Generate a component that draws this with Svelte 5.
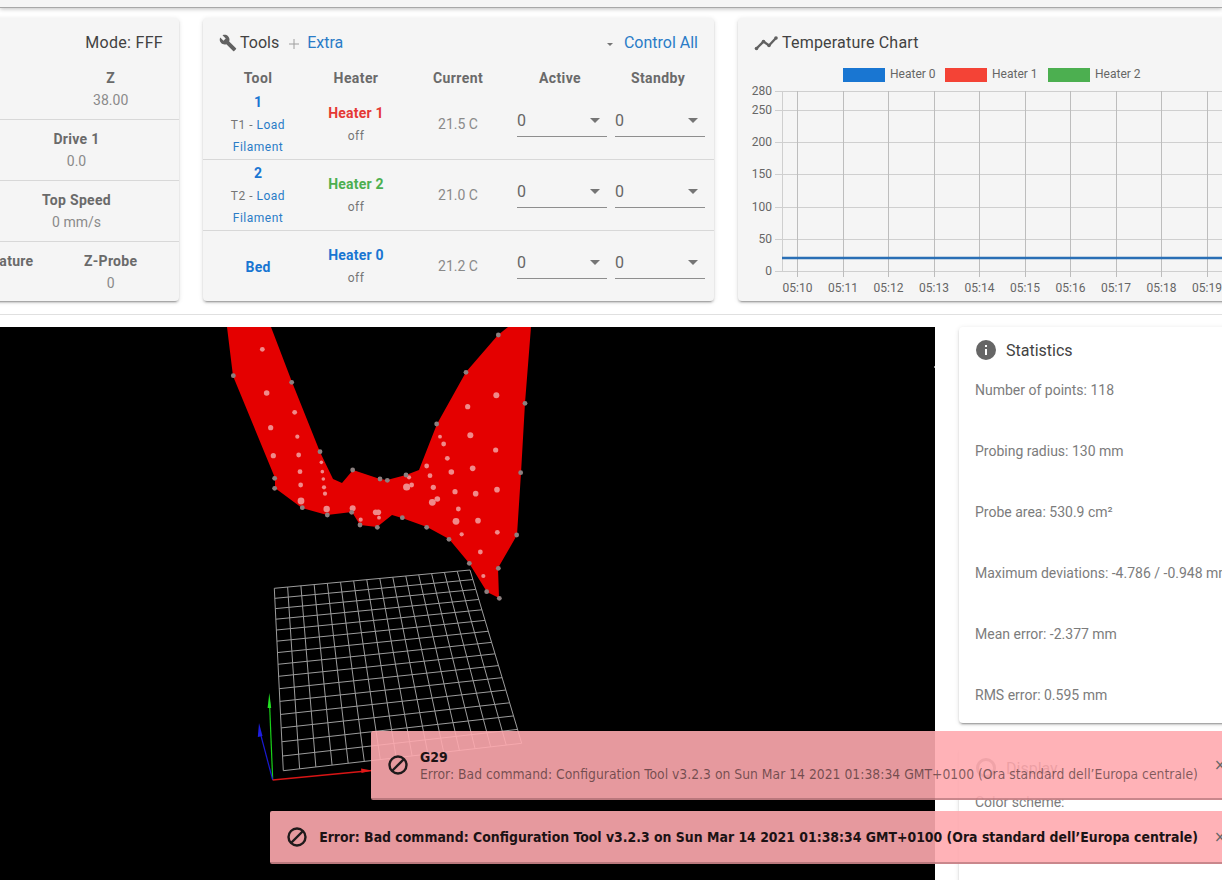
<script>
  const sx = (z) => 210 + z / 3;
  const sy = (z) => z / 3 - 2;

  // mesh outline, traced in page px (viewer origin is y=327)
  const outline = [[227,327],[271,327],[292,382],[320,452],[333,479],[342,483],[353,470],[380,479],[387,480],[406,475],[419,470],[437,424],[466,372],[498,335],[508,327],[531,327],[525,403],[521,473],[517,535],[498,568],[499,598],[487,592],[469,563],[449,539],[427,527],[402,518],[392,515],[377,527],[360,525],[352,512],[327,515],[302,508],[275,488],[275,478],[233,376]]
    .map(([x, y]) => `${x},${y - 327}`).join(" ");

  const edgePoints = [[70,152],[245,172],[330,380],[194,460],[194,490],[277,548],[352,570],[428,435],[510,462],[532,466],[588,450],[680,297],[768,142],[865,30],[945,235],[932,443],[920,630],[865,730],[868,820],[830,800],[778,715],[717,643],[650,607],[577,578],[502,607],[450,600],[425,562]];
  const innerPoints = [[157,73,2.4],[170,204,2.8],[254,262,2.4],[182,308,2.6],[262,335,2.1],[190,392,2.6],[266,390,2.4],[270,440,2.4],[272,480,2.4],[273,528,3.4],[334,412,1.8],[337,440,1.8],[340,462,1.8],[342,487,2.1],[345,506,2.1],[350,552,3.2],[428,550,3],[452,584,2.1],[497,562,2.8],[505,562,2.8],[507,578,1.9],[590,486,3.6],[605,480,2.4],[597,457,2.1],[650,423,2.4],[660,452,2.4],[670,487,2.6],[667,532,3.4],[682,522,2.8],[712,400,2.4],[701,357,2.4],[690,335,1.9],[724,441,2.8],[735,500,2.6],[745,552,2.4],[738,589,3.4],[755,628,2.1],[804,587,2.8],[797,506,2.8],[788,430,2.8],[781,331,3],[773,245,2.6],[859,211,3],[857,375,2.6],[861,494,2.8],[862,622,2.4],[811,681,2.4],[820,753,2.1]];

  // projective map of the unit square on to the bed quad
  const quad = [[274.3,261.3],[470,243],[521.7,416.3],[283.3,443.7]];
  function homography([[x0,y0],[x1,y1],[x2,y2],[x3,y3]]) {
    const dx1 = x1 - x2, dx2 = x3 - x2, dx3 = x0 - x1 + x2 - x3;
    const dy1 = y1 - y2, dy2 = y3 - y2, dy3 = y0 - y1 + y2 - y3;
    const det = dx1 * dy2 - dx2 * dy1;
    const g = (dx3 * dy2 - dx2 * dy3) / det;
    const h = (dx1 * dy3 - dx3 * dy1) / det;
    const a = x1 - x0 + g * x1, b = x3 - x0 + h * x3;
    const d = y1 - y0 + g * y1, e = y3 - y0 + h * y3;
    return (u, v) => {
      const w = g * u + h * v + 1;
      return [(a * u + b * v + x0) / w, (d * u + e * v + y0) / w];
    };
  }
  const project = homography(quad);
  const cells = 15;
  const gridLines = [];
  for (let i = 0; i <= cells; i++) {
    const t = i / cells;
    gridLines.push([project(t, 0), project(t, 1)]);
    gridLines.push([project(0, t), project(1, t)]);
  }

  const yTicks = [[280,91],[250,110],[200,142],[150,174],[100,207],[50,239],[0,271]];
  const xTicks = ["05:10","05:11","05:12","05:13","05:14","05:15","05:16","05:17","05:18","05:19"];
  const legend = [
    { name: "Heater 0", color: "#1976d2", x: 843 },
    { name: "Heater 1", color: "#f44336", x: 945 },
    { name: "Heater 2", color: "#4caf50", x: 1048 }
  ];

  const tools = [
    { id: "1", sub: "T1", heater: "Heater 1", cls: "red", current: "21.5 C" },
    { id: "2", sub: "T2", heater: "Heater 2", cls: "green", current: "21.0 C" },
    { id: "Bed", sub: "", heater: "Heater 0", cls: "blue", current: "21.2 C" }
  ];

  const stats = [
    "Number of points: 118",
    "Probing radius: 130 mm",
    "Probe area: 530.9 cm²",
    "Maximum deviations: -4.786 / -0.948 mm",
    "Mean error: -2.377 mm",
    "RMS error: 0.595 mm"
  ];

  const message = "Error: Bad command: Configuration Tool v3.2.3 on Sun Mar 14 2021 01:38:34 GMT+0100 (Ora standard dell’Europa centrale)";
</script>

{#snippet blockIcon()}
  <svg class="block-icon" width="22" height="22" viewBox="0 0 22 22">
    <circle cx="11" cy="11" r="8.5" fill="none" stroke="#1f1a1b" stroke-width="2.4" />
    <line x1="5" y1="17" x2="17" y2="5" stroke="#1f1a1b" stroke-width="2.4" />
  </svg>
{/snippet}

{#snippet select()}
  <div class="select">
    <span>0</span>
    <i class="arrow"></i>
  </div>
{/snippet}

<div class="page">
  <div class="topbar"></div>

  <div class="cards">
    <section class="card status">
      <div class="status-head">Mode: FFF</div>
      <div class="status-row first">
        <div><b>X</b><span>100.00</span></div>
        <div><b>Y</b><span>100.00</span></div>
        <div><b>Z</b><span>38.00</span></div>
      </div>
      <div class="status-row">
        <div><b>Drive 0</b><span>0.0</span></div>
        <div><b>Drive 1</b><span>0.0</span></div>
      </div>
      <div class="status-row">
        <div><b>Requested Speed</b><span>0 mm/s</span></div>
        <div><b>Top Speed</b><span>0 mm/s</span></div>
      </div>
      <div class="status-row">
        <div><b>Vin</b><span>24.1 V</span></div>
        <div><b>MCU Temperature</b><span>30.2 C</span></div>
        <div><b>Z-Probe</b><span>0</span></div>
      </div>
    </section>

    <section class="card tools">
      <div class="tools-head">
        <svg width="18" height="18" viewBox="0 0 24 24" fill="#616161"><path d="M22.7,19L13.6,9.9C14.5,7.6 14,4.9 12.1,3C10.1,1 7.1,0.6 4.7,1.7L9,6L6,9L1.6,4.7C0.4,7.1 0.9,10.1 2.9,12.1C4.8,14 7.5,14.5 9.8,13.6L18.9,22.7C19.3,23.1 19.9,23.1 20.3,22.7L22.6,20.4C23.1,20 23.1,19.3 22.7,19Z" /></svg>
        <span class="title">Tools</span>
        <svg class="plus" width="10" height="10" viewBox="0 0 10 10"><path d="M5 0v10M0 5h10" stroke="#9e9e9e" stroke-width="1" /></svg>
        <span class="link">Extra</span>
        <span class="spacer"></span>
        <i class="caret"></i>
        <span class="link">Control All</span>
      </div>
      <div class="tool-grid heads">
        <div>Tool</div>
        <div>Heater</div>
        <div>Current</div>
        <div class="th-active">Active</div>
        <div class="th-standby">Standby</div>
      </div>
      {#each tools as tool}
        <div class="tool-grid row">
          <div class="tool-name">
            <b>{tool.id}</b>
            {#if tool.sub}
              <small>{tool.sub} - <a href="#load">Load Filament</a></small>
            {/if}
          </div>
          <div class="heater">
            <b class={tool.cls}>{tool.heater}</b>
            <small>off</small>
          </div>
          <div class="current">{tool.current}</div>
          {@render select()}
          {@render select()}
        </div>
      {/each}
    </section>

    <section class="card chart">
      <div class="chart-head">
        <svg width="24" height="24" viewBox="0 0 24 24" fill="#616161">
          <polyline points="2.5,17.5 9.5,10.5 15,14.5 22,7" fill="none" stroke="#616161" stroke-width="2.4" />
          <circle cx="2.5" cy="17.5" r="1.8" /><circle cx="9.5" cy="10.5" r="1.8" /><circle cx="15" cy="14.5" r="1.8" /><circle cx="22" cy="7" r="1.8" />
        </svg>
        <span class="title">Temperature Chart</span>
      </div>
      <svg class="plot" width="484" height="241" viewBox="738 60 484 241">
        {#each legend as item}
          <rect x={item.x} y="68" width="42" height="14" fill={item.color} />
          <text x={item.x + 47} y="78" class="tick">{item.name}</text>
        {/each}
        {#each yTicks as [label, y]}
          <line x1="775" x2="1222" y1={y + 0.5} y2={y + 0.5} class="gridline" />
          <text x="772" y={y + 4} text-anchor="end" class="tick">{label}</text>
        {/each}
        <line x1="782.5" x2="782.5" y1="91" y2="271" class="gridline" />
        {#each xTicks as label, i}
          <line x1={797.5 + Math.round(i * 45.5)} x2={797.5 + Math.round(i * 45.5)} y1="91" y2="277" class="gridline dark" />
          <text x={797.5 + i * 45.5} y="292" text-anchor="middle" class="tick">{label}</text>
        {/each}
        <line x1="782" x2="1222" y1="258" y2="258" stroke="#2a6fb5" stroke-width="2.4" />
      </svg>
    </section>
  </div>

  <hr />

  <div class="lower">
    <div class="viewer">
      <svg width="935" height="553" viewBox="0 0 935 553">
        {#each gridLines as [a, b]}
          <line x1={a[0]} y1={a[1]} x2={b[0]} y2={b[1]} stroke="#9c9c9c" stroke-width="1" />
        {/each}

        <polygon points={outline} fill="#e40000" />
        {#each innerPoints as [x, y, r]}
          <circle cx={sx(x)} cy={sy(y)} {r} fill="#f08a8a" />
        {/each}
        {#each edgePoints as [x, y]}
          <circle cx={sx(x)} cy={sy(y)} r="2.4" fill="#8c8080" />
        {/each}

        <!-- axes helper -->
        <line x1="272.7" y1="453" x2="269.5" y2="375" stroke="#19d119" stroke-width="1.2" />
        <polygon points="269.3,366 267.6,381 271.2,381" fill="#22e022" />
        <line x1="272.7" y1="453" x2="260" y2="405" stroke="#1a1ad0" stroke-width="1.2" />
        <polygon points="259,396 257.8,410 262.5,409" fill="#1e1ee0" />
        <line x1="272.7" y1="453" x2="372" y2="443.5" stroke="#d81515" stroke-width="1.5" />
        <polygon points="372,443.5 361,441.5 361.5,446" fill="#e01818" />

        <rect x="934" y="39" width="1" height="2" fill="#999" />
      </svg>
    </div>

    <div class="side">
      <section class="panel stats">
        <div class="panel-title">
          <svg width="24" height="24" viewBox="0 0 24 24" fill="#666"><path d="M13,9H11V7H13M13,17H11V11H13M12,2A10,10 0 0,0 2,12A10,10 0 0,0 12,22A10,10 0 0,0 22,12A10,10 0 0,0 12,2Z" /></svg>
          <span>Statistics</span>
        </div>
        <div class="stat-list">
          {#each stats as line}
            <div>{line}</div>
          {/each}
        </div>
      </section>

      <section class="panel display">
        <div class="panel-title">
          <svg width="24" height="24" viewBox="0 0 24 24" fill="none" stroke="#666" stroke-width="3"><circle cx="12" cy="12" r="8.5" /></svg>
          <span>Display</span>
        </div>
        <div class="display-body">Color scheme:</div>
      </section>
    </div>
  </div>

  <div class="toasts">
    <div class="toast tall">
      {@render blockIcon()}
      <div class="toast-text">
        <strong>G29</strong>
        <p>{message}</p>
      </div>
      <span class="close">×</span>
    </div>
    <div class="toast">
      {@render blockIcon()}
      <div class="toast-text">
        <strong>{message}</strong>
      </div>
      <span class="close">×</span>
    </div>
  </div>
</div>

<style>
  :global(body) {
    margin: 0;
    background: #fff;
    font-family: Roboto, "Liberation Sans", sans-serif;
  }

  .page {
    position: relative;
    width: 1222px;
    height: 880px;
    overflow: hidden;
    background: #fff;
  }

  .topbar {
    height: 7px;
    background: #f5f5f5;
    border-bottom: 1px solid #a8a8a8;
    box-shadow: 0 1px 4px rgba(0, 0, 0, 0.25);
  }

  .cards {
    display: flex;
    gap: 24px;
    margin: 10px 0 0 -233px;
    height: 283px;
  }

  .card {
    flex: none;
    background: #f5f5f5;
    border-radius: 4px;
    box-shadow: 0 3px 1px -2px rgba(0, 0, 0, 0.2), 0 2px 2px 0 rgba(0, 0, 0, 0.14), 0 1px 5px 0 rgba(0, 0, 0, 0.12);
    color: #616161;
    font-size: 14px;
  }

  .status {
    width: 412px;
  }

  .status-head {
    height: 49px;
    line-height: 50px;
    padding-right: 16px;
    text-align: right;
    font-size: 16px;
    letter-spacing: 0.3px;
    color: #424242;
  }

  .status-row {
    display: flex;
    height: 61px;
    border-top: 1px solid #d8d8d8;
    box-sizing: border-box;
    padding: 8px 0 0 2px;
  }

  .status-row.first {
    height: 52px;
    border-top: none;
    padding-top: 0;
  }

  .status-row > div {
    flex: 1 1 0;
    text-align: center;
    line-height: 22px;
  }

  .status-row b {
    display: block;
    font-weight: 700;
    letter-spacing: 0.3px;
    color: #6a6a6a;
  }

  .status-row span {
    color: #8a8a8a;
  }

  .tools {
    width: 511px;
  }

  .tools-head {
    display: flex;
    align-items: center;
    height: 49px;
    padding: 0 16px;
    font-size: 16px;
  }

  .tools-head .title {
    margin-left: 3px;
    color: #424242;
  }

  .plus {
    margin: 2px 8px 0 10px;
  }

  .link {
    color: #2a7cc7;
  }

  .spacer {
    flex: 1;
  }

  .caret {
    width: 0;
    height: 0;
    margin: 3px 11px 0 0;
    border-left: 3px solid transparent;
    border-right: 3px solid transparent;
    border-top: 3px solid #757575;
  }

  .tool-grid {
    display: grid;
    grid-template-columns: 110px 86px 118px 98px 90px;
    padding-right: 9px;
    text-align: center;
    align-items: center;
  }

  .heads {
    height: 21px;
    font-weight: 700;
    letter-spacing: 0.4px;
    color: #6a6a6a;
  }

  .th-active {
    padding-right: 12px;
  }

  .th-standby {
    padding-right: 4px;
  }

  .row {
    height: 71px;
    border-top: 1px solid #d8d8d8;
    box-sizing: border-box;
  }

  .heads + .row {
    border-top-color: transparent;
  }

  .tool-name,
  .heater {
    padding-top: 1px;
  }

  .tool-name b,
  .heater b {
    display: block;
    line-height: 22px;
    font-weight: 700;
    letter-spacing: 0.2px;
    color: #1976d2;
  }

  .tool-name small,
  .heater small {
    display: block;
    padding-top: 1px;
    font-size: 12px;
    line-height: 22px;
    letter-spacing: 0.5px;
    color: #757575;
  }

  .tool-name a {
    color: #2a7cc7;
    text-decoration: none;
  }

  .tool-name small {
    padding-left: 20px;
    padding-right: 20px;
  }

  .heater .red {
    color: #e53935;
  }

  .heater .green {
    color: #4caf50;
  }

  .current {
    color: #8a8a8a;
  }

  .select {
    display: flex;
    align-items: center;
    justify-content: space-between;
    width: 90px;
    height: 32px;
    margin-top: -6px;
    box-sizing: border-box;
    border-bottom: 1px solid #8e8e8e;
    padding: 0 7px 0 0;
    font-size: 16px;
    color: #666;
  }

  .arrow {
    width: 0;
    height: 0;
    border-left: 5px solid transparent;
    border-right: 5px solid transparent;
    border-top: 5px solid #757575;
  }

  .chart {
    width: 520px;
  }

  .chart-head {
    display: flex;
    align-items: center;
    gap: 4px;
    height: 49px;
    padding: 0 16px;
    font-size: 16px;
    letter-spacing: 0.2px;
    color: #424242;
    box-sizing: border-box;
  }

  .plot {
    display: block;
    margin-top: -7px;
  }

  .tick {
    font: 12px Roboto, sans-serif;
    fill: #666;
  }

  .gridline {
    stroke: #cfcfcf;
    stroke-width: 1;
  }

  .gridline.dark {
    stroke: #bdbdbd;
  }

  hr {
    height: 1px;
    margin: 13px 0 12px;
    border: none;
    background: #e0e0e0;
  }

  .lower {
    display: flex;
    gap: 24px;
  }

  .viewer {
    flex: none;
    width: 935px;
    height: 553px;
    background: #000;
  }

  .viewer svg {
    display: block;
  }

  .side {
    flex: none;
    width: 320px;
    display: flex;
    flex-direction: column;
    gap: 24px;
  }

  .panel {
    background: #fff;
    border-radius: 4px;
    box-shadow: 0 3px 1px -2px rgba(0, 0, 0, 0.2), 0 2px 2px 0 rgba(0, 0, 0, 0.14), 0 1px 5px 0 rgba(0, 0, 0, 0.12);
    padding: 0 16px;
    font-size: 14px;
    color: #7c7c7c;
  }

  .panel-title {
    display: flex;
    align-items: center;
    gap: 8px;
    height: 46px;
    margin-left: -1px;
    font-size: 16px;
    color: #424242;
  }

  .display .panel-title {
    height: 42px;
  }

  .stat-list {
    display: flex;
    flex-direction: column;
    gap: 40px;
    padding: 7px 0 17px;
    line-height: 21px;
    white-space: nowrap;
  }

  .display-body {
    margin-top: 3px;
    height: 120px;
    line-height: 21px;
  }

  .toasts {
    position: absolute;
    top: 731px;
    right: -20px;
    display: flex;
    flex-direction: column;
    align-items: flex-end;
    gap: 11px;
  }

  .toast {
    display: flex;
    align-items: center;
    height: 53px;
    box-sizing: border-box;
    padding: 0 16px 0 16px;
    background: rgba(255, 170, 175, 0.9);
    border-radius: 2px;
    border-bottom: 2px solid rgba(120, 70, 75, 0.4);
    color: #000;
    font-family: "DejaVu Sans Condensed", "DejaVu Sans", sans-serif;
    font-stretch: condensed;
    font-size: 13.8px;
  }

  .toast.tall {
    height: 69px;
  }

  .block-icon {
    flex: none;
    margin-right: 11px;
  }

  .toast-text {
    padding-top: 2px;
    line-height: 17px;
    white-space: nowrap;
  }

  .toast-text strong {
    display: block;
    font-weight: 700;
    font-size: 13.9px;
    color: #1c1214;
  }

  .toast-text p {
    margin: 0;
    color: rgba(0, 0, 0, 0.5);
  }

  .close {
    margin-left: 16px;
    color: #666;
    font-size: 16px;
  }
</style>
